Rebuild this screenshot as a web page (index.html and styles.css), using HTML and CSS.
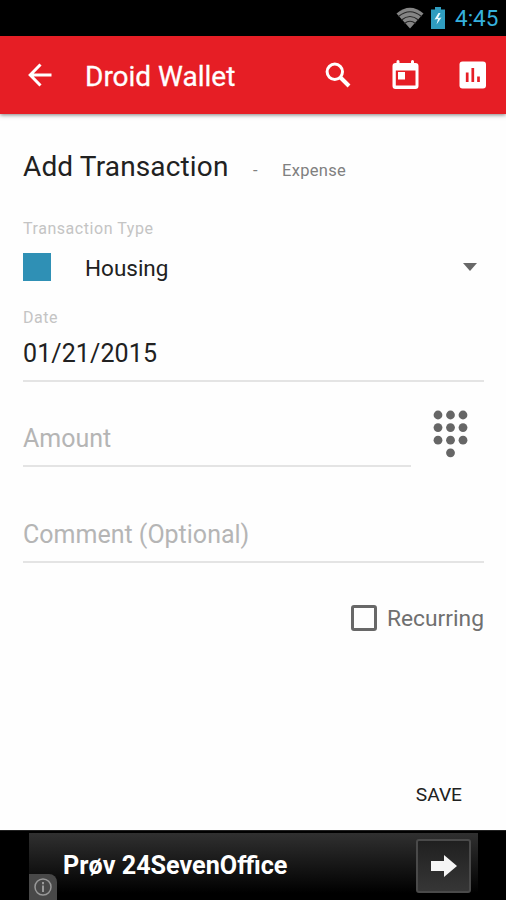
FILE: index.html
```html
<!DOCTYPE html>
<html lang="en">
<head>
<meta charset="utf-8">
<title>Droid Wallet</title>
<link rel="stylesheet" href="styles.css">
</head>
<body>
<div class="status">
  <svg width="28" height="22" viewBox="0 0 28 22"><path d="M0.5 6.5Q14-5 27.500 6.500L14 21.500Z" fill="#858585"/><path d="M2.500 9.500Q14 0 25.500 9.500M5.500 13Q14 6 22.500 13M8.500 16.500Q14 12 19.500 16.500" fill="none" stroke="#262626" stroke-width="1.200"/></svg>
  <svg class="battery" width="14" height="22" viewBox="0 0 14 22"><path d="M0 2.500H4V0H10V2.500H14V22H0Z" fill="#2f9dc0"/><path d="M7.500 6L3.500 12.500L7 12L5.500 17.500L10.500 10.500L7 11L9.500 6Z" fill="#eafaff"/></svg>
  <span class="clock">4:45</span>
</div>
<header class="appbar">
  <svg class="back" width="24" height="24" viewBox="0 0 24 24"><path d="M23.500 12H2M12.500 1.500L2.200 12L12.500 22.500" fill="none" stroke="#fff" stroke-width="3"/></svg>
  <h1 class="title">Droid Wallet</h1>
  <svg class="search" width="26" height="26" viewBox="0 0 26 26"><circle cx="9.800" cy="9.800" r="7.700" fill="none" stroke="#fff" stroke-width="3"/><path d="M15.500 15.500L24 24" stroke="#fff" stroke-width="4"/></svg>
  <svg class="calendar" width="28" height="30" viewBox="0 0 28 30"><path fill="#fff" fill-rule="evenodd" d="M4.500 1.500Q4.500 0 6 0Q7.500 0 7.500 1.500V3H19V1.500Q19 0 20.500 0Q22 0 22 1.500V3H23.500Q26.500 3 26.500 6V26Q26.500 29 23.500 29H3.500Q0.500 29 0.500 26V6Q0.500 3 3.500 3H4.500ZM3.800 10.500V25.500H23.500V10.500ZM6 12H13V19.500H6Z"/></svg>
  <svg class="chart" width="28" height="28" viewBox="0 0 28 28"><rect x=".5" y=".5" width="26.500" height="27" rx="3" fill="#fff"/><path d="M8.200 11.500V21M13.800 7V21M19.500 15.500V21" stroke="#e61e25" stroke-width="2.700"/></svg>
</header>
<main class="form">
  <div class="heading"><h2>Add Transaction</h2><span class="dash">-</span><span class="kind">Expense</span></div>
  <div class="label type-label"><span>Transaction Type</span></div>
  <div class="select"><i class="swatch"></i><span class="choice">Housing</span><svg width="14" height="8" viewBox="0 0 14 8"><path d="M0 0H14L7 8Z" fill="#686868"/></svg></div>
  <div class="label date-label"><span>Date</span></div>
  <div class="field date"><span>01/21/2015</span></div>
  <div class="amount-row">
    <div class="field amount"><span>Amount</span></div>
    <svg class="keypad" width="36" height="48" viewBox="0 0 36 48" fill="#666"><circle cx="5" cy="5" r="4.400"/><circle cx="17.500" cy="5" r="4.400"/><circle cx="30" cy="5" r="4.400"/><circle cx="5" cy="17.600" r="4.400"/><circle cx="17.500" cy="17.600" r="4.400"/><circle cx="30" cy="17.600" r="4.400"/><circle cx="5" cy="30.200" r="4.400"/><circle cx="17.500" cy="30.200" r="4.400"/><circle cx="30" cy="30.200" r="4.400"/><circle cx="17.500" cy="42.800" r="4.400"/></svg>
  </div>
  <div class="field comment"><span>Comment (Optional)</span></div>
  <div class="recurring"><i class="box"></i><span>Recurring</span></div>
  <div class="actions"><span>SAVE</span></div>
</main>
<footer class="ad">
  <div class="banner">
    <span class="ad-text">Prøv 24SevenOffice</span>
    <div class="go"><svg width="28" height="24" viewBox="0 0 28 24"><path d="M1 7H14V1L27 12L14 23V17H1Z" fill="#f5f5f5"/></svg></div>
    <div class="info"><svg width="20" height="20" viewBox="0 0 20 20"><circle cx="10" cy="10" r="8" fill="none" stroke="#999" stroke-width="1.500"/><path d="M10 8.500V15M10 5V7.200" stroke="#999" stroke-width="2"/></svg></div>
  </div>
</footer>
</body>
</html>
```
FILE: styles.css
```css
* { box-sizing: border-box; }
body { margin: 0; width: 506px; height: 900px; overflow: hidden; background: #fefefe; color: #212121; font-family: Roboto, "Liberation Sans", sans-serif; }
h1, h2 { margin: 0; font-weight: 400; }
span { white-space: nowrap; }
svg { display: block; flex: none; }

.status { height: 36px; background: #000; display: flex; justify-content: flex-end; align-items: center; padding-right: 8px; }
.battery { margin-left: 7px; }
.clock { width: 43px; margin-left: 10px; font-size: 22.500px; line-height: 36px; color: #35b1dd; }

.appbar { height: 78px; background: #e61e25; display: flex; align-items: center; padding: 0 19px 0 28px; box-shadow: 0 1px 4px rgba(0, 0, 0, .5); }
.title { margin-left: 33px; flex: 1; font-size: 28px; -webkit-text-stroke: .3px #fff; line-height: 78px; color: #fff; padding-top: 3px; }
.calendar { margin: 0 39px 0 41px; }

.form { height: 716px; padding: 30px 22px 0 23px; }
.heading { height: 46px; display: flex; align-items: baseline; line-height: 46px; }
.heading h2 { width: 230px; font-size: 28px; letter-spacing: .15px; }
.dash, .kind { font-size: 16.500px; color: #808080; letter-spacing: .3px; }
.dash { width: 29px; }
.label { font-size: 16px; letter-spacing: .55px; color: #c4c4c4; }
.type-label { height: 22px; line-height: 22px; margin-top: 28px; }
.select { height: 28px; margin-top: 13px; display: flex; align-items: center; padding-right: 7px; }
.swatch { width: 28px; height: 28px; background: #2f90b5; }
.choice { margin-left: 34px; padding-top: 2px; flex: 1; font-size: 22.500px; line-height: 28px; }
.date-label { height: 22px; line-height: 22px; margin-top: 26px; }
.field { border-bottom: 2px solid #e4e4e4; font-size: 25px; color: #b5b5b5; }
.date { height: 53px; line-height: 50px; color: #212121; letter-spacing: .1px; }
.amount-row { height: 85px; display: flex; justify-content: space-between; align-items: flex-start; padding-right: 15px; }
.amount { width: 388px; height: 85px; padding-top: 32px; line-height: 50px; }
.keypad { margin-top: 28px; }
.comment { height: 96px; padding-top: 43px; line-height: 50px; }
.recurring { height: 36px; margin-top: 37px; display: flex; align-items: center; justify-content: flex-end; font-size: 22.800px; color: #707070; }
.recurring span { padding-top: 1px; }
.box { width: 26px; height: 26px; margin-right: 10px; border: 3px solid #686868; border-radius: 3px; }
.actions { height: 40px; margin-top: 139px; display: flex; justify-content: flex-end; padding-right: 22px; font-size: 19.200px; line-height: 40px; }

.ad { height: 70px; background: #000; border-top: 1px solid #222; padding: 2px 28px 0 29px; }
.banner { position: relative; height: 67px; background: linear-gradient(#303030, #000 90%); display: flex; justify-content: space-between; padding: 6px 7px 0 34px; }
.ad-text { font-size: 25.200px; line-height: 54px; font-weight: 700; color: #fff; }
.go { width: 55px; height: 54px; border: 2px solid #4a4a4a; border-radius: 3px; background: linear-gradient(#202020, #363636); display: flex; align-items: center; justify-content: center; }
.info { position: absolute; left: 0; bottom: 0; width: 28px; height: 26px; border-radius: 0 8px 0 0; background: #484848; display: flex; align-items: center; justify-content: center; }
```
